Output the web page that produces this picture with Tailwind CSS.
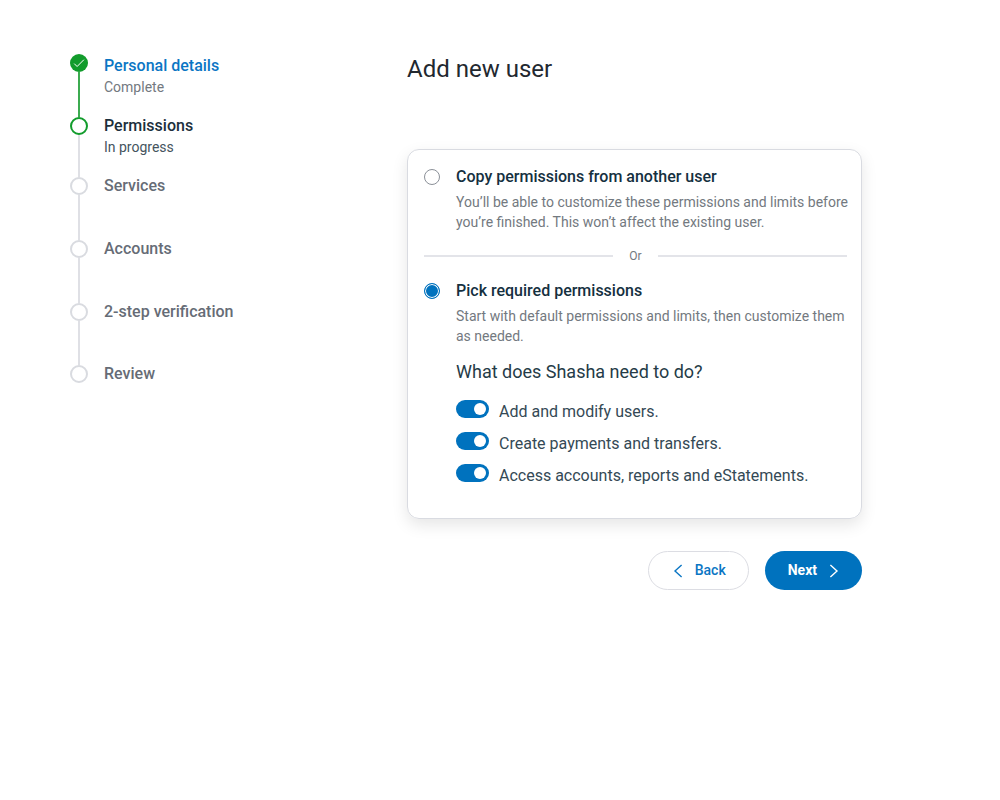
<!DOCTYPE html>
<html lang="en">

<head>
    <meta charset="UTF-8">
    <meta name="viewport" content="width=device-width, initial-scale=1">
    <title>Add new user</title>
    <script src="https://cdn.jsdelivr.net/npm/@tailwindcss/browser@4"></script>
</head>

<body class="bg-white font-['Roboto',sans-serif] text-[#1c3240]">

    <div class="flex min-h-screen pt-[54px] pl-[70px] pr-[138px]">
        <!-- Progress steps -->
        <nav class="w-[337px] shrink-0" aria-label="Progress">
            <ol>
                <li class="flex gap-4 min-h-[63px]">
                    <div class="flex flex-col items-center w-[18px]">
                        <svg class="w-[18px] h-[18px] shrink-0" viewBox="0 0 18 18" fill="none">
                            <circle cx="9" cy="9" r="9" fill="#129c2c" />
                            <path d="M4.2 9.6l2.9 2.9 6.8-6.8" stroke="#fff" stroke-width="1" />
                        </svg>
                        <div class="w-[2px] flex-1 bg-[#3cab50]"></div>
                    </div>
                    <div>
                        <a href="#" class="block text-base leading-6 font-medium text-[#0b76c4]">Personal details</a>
                        <p class="text-sm leading-[18px] text-[#737980]">Complete</p>
                    </div>
                </li>
                <li class="flex gap-4 min-h-[60px]" aria-current="step">
                    <div class="flex flex-col items-center w-[18px]">
                        <div class="w-[18px] h-[18px] shrink-0 rounded-full border-2 border-[#129c2c]"></div>
                        <div class="w-[2px] flex-1 bg-[#dfe0e5]"></div>
                    </div>
                    <div>
                        <p class="text-base leading-[18px] font-medium text-[#1c2f3c]">Permissions</p>
                        <p class="pt-0.5 text-sm text-[#45545e]">In progress</p>
                    </div>
                </li>
                <li class="flex gap-4 min-h-[63px]">
                    <div class="flex flex-col items-center w-[18px]">
                        <div class="w-[18px] h-[18px] shrink-0 rounded-full border-2 border-[#d9dbe0]"></div>
                        <div class="w-[2px] flex-1 bg-[#dfe0e5]"></div>
                    </div>
                    <p class="text-base leading-[18px] font-medium text-[#666c76]">Services</p>
                </li>
                <li class="flex gap-4 min-h-[63px]">
                    <div class="flex flex-col items-center w-[18px]">
                        <div class="w-[18px] h-[18px] shrink-0 rounded-full border-2 border-[#d9dbe0]"></div>
                        <div class="w-[2px] flex-1 bg-[#dfe0e5]"></div>
                    </div>
                    <p class="text-base leading-[18px] font-medium text-[#666c76]">Accounts</p>
                </li>
                <li class="flex gap-4 min-h-[62px]">
                    <div class="flex flex-col items-center w-[18px]">
                        <div class="w-[18px] h-[18px] shrink-0 rounded-full border-2 border-[#d9dbe0]"></div>
                        <div class="w-[2px] flex-1 bg-[#dfe0e5]"></div>
                    </div>
                    <p class="text-base leading-[18px] font-medium text-[#666c76]">2-step verification</p>
                </li>
                <li class="flex gap-4">
                    <div class="w-[18px] h-[18px] shrink-0 rounded-full border-2 border-[#d9dbe0]"></div>
                    <p class="text-base leading-[18px] font-medium text-[#666c76]">Review</p>
                </li>
            </ol>
        </nav>

        <main class="flex-1">
            <h1 class="text-2xl leading-[30px] text-[#22282f]">Add new user</h1>

            <form>
                <div class="mt-[65px] rounded-xl border border-[#d9dbe1] pt-4 pb-[30px] pl-4 pr-[14px] shadow-[0_6px_16px_rgba(0,0,0,0.1)]">
                    <div class="flex gap-4">
                        <input type="radio" name="mode" id="mode__copy"
                               class="appearance-none w-4 h-4 mt-[3px] shrink-0 rounded-full border border-[#8b9098] checked:border-[#0072be] checked:bg-[#0072be] checked:inset-ring-1 checked:inset-ring-white">
                        <div class="flex-1 -mr-2">
                            <label for="mode__copy" class="block text-base leading-[22px] font-medium text-[#15303f]">Copy permissions from another user</label>
                            <p class="mt-1 text-sm text-[#737980]">You’ll be able to customize these permissions and limits before you’re finished. This won’t affect the existing user.</p>
                        </div>
                    </div>

                    <div class="flex items-center gap-4 my-4">
                        <div class="flex-1 h-[2px] bg-[#e3e4e9]"></div>
                        <span class="text-xs text-[#737980]">Or</span>
                        <div class="flex-1 h-[2px] bg-[#e3e4e9]"></div>
                    </div>

                    <div class="flex gap-4">
                        <input type="radio" name="mode" id="mode__pick" checked
                               class="appearance-none w-4 h-4 mt-[3px] shrink-0 rounded-full border border-[#8b9098] checked:border-[#0072be] checked:bg-[#0072be] checked:inset-ring-1 checked:inset-ring-white">
                        <div class="flex-1">
                            <label for="mode__pick" class="block text-base leading-[22px] font-medium text-[#15303f]">Pick required permissions</label>
                            <p class="mt-1 text-sm text-[#737980]">Start with default permissions and limits, then customize them as needed.</p>

                            <h2 class="mt-[14px] text-lg leading-6 text-[#253b47]">What does Shasha need to do?</h2>
                            <div class="flex flex-col gap-2 mt-4 text-base text-[#344955]">
                                <div class="flex gap-[10px]">
                                    <input type="checkbox" id="perm__users" checked
                                           class="appearance-none w-[33px] h-[18px] shrink-0 rounded-full bg-[#8b9098] p-[3px] before:block before:size-3 before:rounded-full before:bg-white checked:bg-[#0072be] checked:before:ml-auto">
                                    <label for="perm__users">Add and modify users.</label>
                                </div>
                                <div class="flex gap-[10px]">
                                    <input type="checkbox" id="perm__payments" checked
                                           class="appearance-none w-[33px] h-[18px] shrink-0 rounded-full bg-[#8b9098] p-[3px] before:block before:size-3 before:rounded-full before:bg-white checked:bg-[#0072be] checked:before:ml-auto">
                                    <label for="perm__payments">Create payments and transfers.</label>
                                </div>
                                <div class="flex gap-[10px]">
                                    <input type="checkbox" id="perm__accounts" checked
                                           class="appearance-none w-[33px] h-[18px] shrink-0 rounded-full bg-[#8b9098] p-[3px] before:block before:size-3 before:rounded-full before:bg-white checked:bg-[#0072be] checked:before:ml-auto">
                                    <label for="perm__accounts">Access accounts, reports and eStatements.</label>
                                </div>
                            </div>
                        </div>
                    </div>
                </div>

                <div class="flex justify-end gap-4 mt-8 text-sm">
                    <button type="button" class="flex items-center gap-3 h-[39px] pl-6 pr-[22px] rounded-full border border-[#dcdde3] font-medium text-[#0b76c4]">
                        <svg class="w-[10px] h-[14px]" viewBox="0 0 10 14" fill="none" stroke="currentColor" stroke-width="1.4">
                            <path d="M8.6 1L2 7l6.6 6" />
                        </svg>
                        <span class="pb-0.5">Back</span>
                    </button>
                    <button type="submit" class="flex items-center gap-3 h-[39px] px-[23px] rounded-full bg-[#0072be] font-bold text-white">
                        <span class="pb-0.5">Next</span>
                        <svg class="w-[10px] h-[14px]" viewBox="0 0 10 14" fill="none" stroke="currentColor" stroke-width="1.4">
                            <path d="M1.4 1L8 7l-6.6 6" />
                        </svg>
                    </button>
                </div>
            </form>
        </main>
    </div>

</body>

</html>
